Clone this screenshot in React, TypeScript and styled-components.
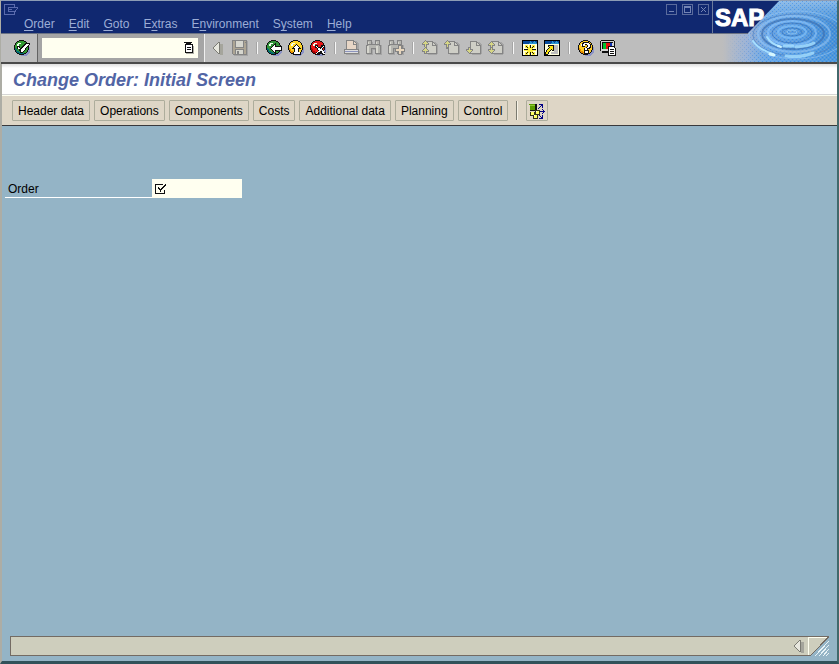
import React from "react";
import styled, { createGlobalStyle } from "styled-components";

const Global = createGlobalStyle`
  * { box-sizing: border-box; }
  body { margin: 0; }
  body, button, input { font-family: "Liberation Sans", Arial, sans-serif; font-size: 12px; }
  button { cursor: default; }
`;

const Window = styled.div`
  min-height: 100vh;
  display: flex;
  flex-direction: column;
  background: #94b4c6;
  border-top: 1px solid #8c9cb5;
  border-left: 2px solid #adada5;
  border-right: 2px solid #42686b;
  border-bottom: 3px solid #31525a;
`;

const Header = styled.header`
  display: flex;
  height: 63px;
  margin-left: -1px;
  border-bottom: 2px solid #4a4a4a;
  background: #bdbdbd;
`;

const HeaderMain = styled.div`
  flex: 1;
  min-width: 0;
  display: flex;
  flex-direction: column;
`;

const MenuArea = styled.div`
  height: 33px;
  background: #102870;
  border-bottom: 1px solid #6b7384;
`;

const Caption = styled.div`
  display: flex;
  justify-content: space-between;
  height: 15px;
  padding: 2px 2px 0 3px;
`;

const Controls = styled.div`
  display: flex;
  gap: 4px;
`;

const PlainButton = styled.button`
  display: flex;
  align-items: center;
  justify-content: center;
  padding: 0;
  border: 0;
  background: transparent;
`;

const MenuBar = styled.nav`
  display: flex;
  gap: 14px;
  padding-left: 23px;
`;

const MenuItem = styled(PlainButton)`
  display: block;
  height: 16px;
  line-height: 16px;
  color: #9cadd6;
  u { text-underline-offset: 2px; }
`;

const Toolbar = styled.div`
  flex: 1;
  display: flex;
  align-items: stretch;
`;

const EnterCell = styled.div`
  width: 37px;
  display: flex;
  align-items: center;
  justify-content: center;
  padding-left: 5px;
  border-right: 1px solid #636363;
`;

const CommandCell = styled.div`
  width: 167px;
  padding: 4px 6px 4px 4px;
  background: #a5a5a5;
  border-right: 1px solid #efefef;
`;

const CommandBox = styled.div`
  display: flex;
  height: 20px;
  background: #fffff0;
`;

const BareInput = styled.input`
  flex: 1;
  min-width: 0;
  padding: 0 3px;
  border: 0;
  outline: 0;
  background: transparent;
`;

const DropButton = styled(PlainButton)`
  width: 18px;
`;

const Tools = styled.div`
  display: flex;
  align-items: center;
  padding-left: 2px;
`;

const ToolButton = styled(PlainButton)`
  width: 22px;
  height: 22px;
`;

const ToolRule = styled.span`
  width: 2px;
  height: 12px;
  margin: 0 5px;
  border-left: 1px solid #a5a5a5;
  background: #f7f7f7;
`;

const Brand = styled.div`
  width: 125px;
  flex: none;
  overflow: hidden;
`;

const TitleBar = styled.div`
  height: 31px;
  padding: 5px 0 0 11px;
  background: linear-gradient(#dedede, #ffffff 4px);
  border-bottom: 1px solid #d6d6d6;
`;

const Title = styled.h1`
  margin: 0;
  font-size: 18px;
  line-height: 22px;
  font-style: italic;
  font-weight: bold;
  color: #5265a5;
`;

const ActionBar = styled.div`
  display: flex;
  align-items: center;
  gap: 4px;
  height: 31px;
  padding-left: 10px;
  background: #ded6c6;
  border-top: 1px solid #fffff0;
  border-bottom: 1px solid #39393c;
`;

const Action = styled.button<{ $icon?: boolean }>`
  display: flex;
  align-items: center;
  justify-content: center;
  height: 21px;
  padding: ${(p) => (p.$icon ? "0 1px" : "0 5px")};
  border: 1px solid #adad9c;
  border-radius: 1px;
  background: transparent;
  color: #000;
`;

const ActionRule = styled.span`
  width: 2px;
  height: 19px;
  margin: 0 4px;
  border-left: 1px solid #7b7b70;
  background: #f7f3e7;
`;

const Content = styled.main`
  flex: 1;
  padding: 53px 3px 0;
`;

const Field = styled.div`
  display: flex;
  height: 19px;
`;

const FieldLabel = styled.label`
  width: 147px;
  padding-left: 3px;
  line-height: 20px;
  border-bottom: 1px solid #fff;
`;

const FieldBox = styled.div`
  display: flex;
  align-items: center;
  width: 90px;
  padding-left: 3px;
  background: #fffff0;
`;

const Footer = styled.footer`
  display: flex;
  margin: 0 7px 5px 8px;
`;

const Status = styled.div`
  flex: 1;
  display: flex;
  align-items: center;
  justify-content: flex-end;
  height: 20px;
  padding-right: 3px;
  border: 1px solid #736b63;
  border-right: 0;
  background: #cecebd;
`;

type IconProps = { w?: number; h?: number; children: React.ReactNode };
const Icon = ({ w = 18, h = 18, children }: IconProps) => (
  <svg width={w} height={h} viewBox={`0 0 ${w} ${h}`} fill="none" shapeRendering="crispEdges" aria-hidden="true">
    {children}
  </svg>
);

const BALL = "M6 1h5v1h2v1h1v1h1v2h1v5h-1v2h-1v1h-1v1h-2v1H6v-1H4v-1H3v-1H2v-2H1V6h1V4h1V3h1V2h2z";
const BALL_FILL = "M6 2h5v1h2v1h1v2h1v5h-1v2h-1v1h-2v1H6v-1H4v-1H3v-2H2V6h1V4h1V3h2z";
const Ball = ({ fill, low, children }: { fill: string; low: string; children: React.ReactNode }) => (
  <Icon>
    <path d="M16 8h1v6h-1v1h-1v1h-1v1H8v-1h3v-1h2v-1h1v-1h1v-2h1z" fill="#8c94c6" />
    <path d={BALL} fill="#101010" />
    <path d={BALL_FILL} fill={fill} />
    <path d="M2 9h1v1h1v2h2v1h2v1h3v1H6v-1H4v-1H3v-2H2z" fill={low} />
    <path d="M5 4h3v1H6v2H4V5h1z" fill="#efffef" />
    {children}
  </Icon>
);

const CheckBall = () => (
  <Ball fill="#319c31" low="#006b73">
    <path d="M4 7h3v2h1V8h1V7h1V6h1V5h1V4h5v2h-1v1h-1v1h-1v1h-1v2h-1v1h-1v1h-1v1H7v-2H6v-2H4z" fill="#101010" />
    <path d="M5 8h1v1h1v2h1v-1h1V9h1V8h1V7h1V6h1V5h3v1h-1v1h-1v1h-1v1h-1v2h-1v1h-1v1H8v-2H7v-1H5z" fill="#fff" />
  </Ball>
);
const BackBall = () => (
  <Ball fill="#319439" low="#006b73">
    <path d="M10 4h1v3h6v5h-6v3h-1v-1H9v-1H8v-1H7v-1H6v-1H5V9h1V8h1V7h1V6h1V5h1z" fill="#101010" />
    <path d="M6 9h1V8h1V7h1V6h1v2h6v3h-6v2H9v-1H8v-1H7v-1H6z" fill="#fff" />
  </Ball>
);
const UpBall = () => (
  <Ball fill="#ffd629" low="#ef9400">
    <path d="M9 5h1v1h1v1h1v1h1v1h1v1h-2v3h2v3H6v-3h1v-3H5V9h1V8h1V7h1V6h1z" fill="#101010" />
    <path d="M9 6h1v1h1v1h1v1h-1v4h2v2H7v-2h1V9H7V8h1V7h1z" fill="#fff" />
  </Ball>
);
const CancelBall = () => (
  <Ball fill="#e71818" low="#ad0000">
    <path d="M6 6h3v2h3V6h4v3h-2v2h1v2h1v3h-3v-2h-2v2H7v-3h2v-2H8V9H6z" fill="#101010" />
    <path d="M7 7h1v1h1v1h2v1h1V9h1V8h1V7h1v1h-1v1h-1v2h1v1h1v2h1v1h-2v-1h-1v-2h-2v1H9v1H8v1H7v-1h1v-1h1v-1h1v-1H9V9H8V8H7z" fill="#fff" />
  </Ball>
);

const G = "#848484";
const SaveIcon = () => (
  <Icon>
    <path d="M2 2h15v15H3z" fill="#a5a5a5" />
    <path d="M1.5 1.5h14v14h-13l-1-1z" fill="#ada594" stroke={G} />
    <path d="M4 2h9v6H4zM5 11h7v4H5z" fill="#d6d6ce" />
    <path d="M4.5 2v6.5h8V2M4.5 15v-4.5h8V15M14 3h1" stroke={G} />
    <path d="M6 12h2v3H6z" fill={G} />
  </Icon>
);
const PrintIcon = () => (
  <Icon>
    <path d="M4 2h9l3 3v7h1v4H3z" fill="#a5a5a5" />
    <path d="M3.5 1.5h7l3 3v6h-10z" fill="#e7d6c6" stroke={G} />
    <path d="M10.5 2v3h3" stroke={G} />
    <path d="M1.5 10.5h14v4h-14z" fill="#dedede" stroke={G} />
    <path d="M2 12h13v1H2z" fill="#8c94bd" />
  </Icon>
);
const Binoculars = ({ plus }: { plus?: boolean }) => (
  <Icon>
    <path d="M4 3h4v3h3V3h4v3h2v10h-6v-5H8v5H2V6h2z" fill="#a5a5a5" />
    <path d="M2.5 1.5h4v4h4v-4h4v5h1v8h-5v-5h-4v5h-5v-8h1z" fill="#b5b5b0" stroke={G} />
    <path d="M3 3h1v3H3zM2 7h2v7H2zM11 3h1v3h-1zM11 7h2v7h-2z" fill="#d6d6ce" />
    <path d="M2 5h5v1H2zM10 5h5v1h-5z" fill={G} />
    {plus && <path d="M11.5 6.5h3v3h3v3h-3v3h-3v-3h-3v-3h3z" fill="#e7d6bd" stroke={G} />}
  </Icon>
);
const PageIcon = ({ up, up2, down, down2 }: { up?: boolean; up2?: boolean; down?: boolean; down2?: boolean }) => (
  <Icon>
    <path d="M7 3h7l3 3v9h-1v1H7z" fill="#a5a5a5" />
    <path d="M5.5 2.5h6l4 4v8h-10z" fill="#cecec6" stroke={G} />
    <path d="M11.5 3v3.5h4" stroke={G} />
    {(up || up2) && <path d="M4 1h1v1h1v1h1v1h1v2H6v2H3V6H1V4h1V3h1V2h1z" fill={G} />}
    {up && <path d="M3 8h3v2H3z" fill={G} />}
    {(up || up2) && <path d="M4 2h1v1h1v1h1v1H5v3H4V5H2V4h1V3h1z" fill="#d6d684" />}
    {up2 && <path d="M4 8h1v1h1v1h1v1h1v2H6v2H3v-2H1v-2h1v-1h1V9h1z" fill={G} />}
    {up2 && <path d="M4 9h1v1h1v1h1v1H5v2H4v-2H2v-1h1v-1h1z" fill="#d6d684" />}
    {down2 && <path d="M4 2h1v1h1v1h1v1h1v2H6v2H3V7H1V5h1V4h1V3h1z" fill={G} />}
    {down2 && <path d="M4 3h1v1h1v1h1v1H5v2H4V6H2V5h1V4h1z" fill="#d6d684" />}
    {(down || down2) && <path d="M3 8h3v2h2v2H7v1H6v1H5v1H4v-1H3v-1H2v-1H1v-2h2z" fill={G} />}
    {(down || down2) && <path d="M4 9h1v2h2v1H6v1H5v1H4v-1H3v-1H2v-1h2z" fill="#d6d684" />}
  </Icon>
);
const Frame = () => (
  <>
    <path d="M1.5 1.5h15v15h-15z" fill="#ffffde" stroke="#000" />
    <path d="M2 2h14v3H2z" fill="#084a9c" />
    <path d="M9 2h1v1h1v1h1V3h1V2h1v1h1v1h1v1H8V4h1z" fill="#2994ce" />
  </>
);
const NewSession = () => (
  <Icon>
    <Frame />
    <path d="M4 6h3v2h1V6h2v2h1V6h3v3h-2v1h3v2h-3v1h2v3h-3v-2h-1v2H8v-2H7v2H4v-3h2v-1H3v-2h3V9H4z" fill="#ffef39" />
    <path d="M9 6v3M9 13v3M3 10.5h4M11 10.5h4" stroke="#101010" />
    <path d="M5 7h1v1H5zM6 8h1v1H6zM12 7h1v1h-1zM11 8h1v1h-1zM5 14h1v1H5zM6 13h1v1H6zM12 14h1v1h-1zM11 13h1v1h-1z" fill="#101010" />
  </Icon>
);
const Shortcut = () => (
  <Icon>
    <Frame />
    <path d="M11 6h4v9H8v-2h3z" fill="#bdbdbd" />
    <path d="M5 6h6v6H9v-1H8v1H7v1H6v2H5v1H2v-3h1v-2h1v-1h1V9h1V8H5z" fill="#101010" />
    <path d="M6 7h4v4H9v-1H8v1H7v1H6v1H5v2H3v-2h1v-2h1v-1h1V9h1V8H6z" fill="#ffe710" />
  </Icon>
);
const HelpIcon = () => (
  <Ball fill="#ffce21" low="#e78c00">
    <path d="M6 3h6v1h1v1h1v4h-1v1h-2v1h1v4H7V9h2V8h1V6H8v2H5V4h1z" fill="#101010" />
    <path d="M7 4h5v1h1v3h-1v1h-2v2H8V9h2V8h1V6h-1V5H8v2H6V5h1zM8 12h3v2H8z" fill="#fff" />
  </Ball>
);
const LayoutIcon = () => (
  <Icon>
    <path d="M2 1h13v1h1v12H3v-2H1V2h1z" fill="#101010" />
    <path d="M2 2h13v10H2z" fill="#d6d6d6" />
    <path d="M4 4h3v6H4z" fill="#00c631" />
    <path d="M7 4h4v6H7z" fill="#e71010" />
    <path d="M11 4h2v6h-2z" fill="#1031b5" />
    <path d="M3 3h11v1H3zM3 3h1v7H3z" fill="#101010" />
    <path d="M9.5 7.5h5l2 2v7h-7z" fill="#fff" stroke="#101010" />
    <path d="M11 10.5h4M11 12.5h4M11 14.5h4" stroke="#101010" />
  </Icon>
);
const LeftTriangle = () => (
  <Icon w={12} h={14}>
    <path d="M8 3h3v11H8z" fill="#a5a59c" />
    <path d="M7.5 1.5v11h-1l-5-5v-1l5-5z" fill="#e7e7de" stroke="#7b7b73" />
  </Icon>
);
const NetworkIcon = () => (
  <Icon>
    <path d="M1 2h8v7H2V3H1z" fill="#101010" />
    <path d="M1 2h6v6H2V3H1z" fill="#5a9c00" />
    <path d="M2 3h5v1H2z" fill="#8cc631" />
    <path d="M7 8h5v5H7zM2 10h5v4H2zM5 13h5v4H5z" fill="#313118" />
    <path d="M8 9h3v3H8zM3 10h3v3H3zM6 13h3v3H6z" fill="#ffff63" />
    <path d="M8 9h1v1H8zM6 13h1v1H6z" fill="#fff" />
    <path
      d="M10 6h1v1h-1zM11 5h1v1h-1zM12 4h1v1h-1zM13 3h1v1h-1zM11 2h4v1h-4zM14 2h1v4h-1zM12 9h5v1h-5zM14 7h1v1h-1zM15 8h1v1h-1zM15 10h1v1h-1zM14 11h1v1h-1zM11 13h1v1h-1zM12 14h1v1h-1zM13 15h1v1h-1zM11 16h4v1h-4zM14 13h1v4h-1z"
      fill="#000084"
    />
  </Icon>
);

const BrandArt = () => (
  <svg width="126" height="61" viewBox="0 0 126 61" role="img" aria-label="SAP">
    <defs>
      <linearGradient id="water" x1="0" x2="1" y1="0" y2="0">
        <stop offset="0.08" stopColor="#bdbdbd" />
        <stop offset="0.28" stopColor="#a5b5d6" />
        <stop offset="0.45" stopColor="#6ba5e7" />
        <stop offset="1" stopColor="#428cd6" />
      </linearGradient>
      <linearGradient id="shine" x1="0" x2="0" y1="0" y2="1">
        <stop offset="0" stopColor="#9cc6ef" stopOpacity="0.8" />
        <stop offset="0.45" stopColor="#5aa5e7" stopOpacity="0.1" />
        <stop offset="1" stopColor="#63b5f7" stopOpacity="0.3" />
      </linearGradient>
      <linearGradient id="fade" x1="0" x2="1" y1="0" y2="0">
        <stop offset="0" stopColor="#000" />
        <stop offset="0.3" stopColor="#fff" />
      </linearGradient>
      <mask id="fadeMask">
        <path d="M14 0h112v61H14z" fill="url(#fade)" />
      </mask>
      <pattern id="grain" width="4" height="4" patternUnits="userSpaceOnUse">
        <path d="M0 0h1v1H0zM2 2h1v1H2z" fill="#a5b5b5" />
        <path d="M2 0h1v1H2zM0 2h1v1H0z" fill="#2173ce" />
      </pattern>
    </defs>
    <path d="M0 0h126v61H0z" fill="url(#water)" />
    <g mask="url(#fadeMask)">
      <path d="M14 0h112v61H14z" fill="url(#shine)" />
      <path d="M14 0h112v61H14z" fill="url(#grain)" opacity="0.4" shapeRendering="crispEdges" />
    </g>
    <g fill="none" opacity="0.6">
      <ellipse cx="80" cy="31" rx="5" ry="2" stroke="#9cd6ff" />
      <ellipse cx="80" cy="31" rx="10" ry="4" stroke="#296bb5" />
      <ellipse cx="80" cy="31" rx="14" ry="6" stroke="#84c6ff" strokeWidth="2" />
      <ellipse cx="80" cy="32" rx="20" ry="10" stroke="#316bb5" />
      <ellipse cx="80" cy="32" rx="24" ry="12" stroke="#8cc6ff" strokeWidth="2" />
      <ellipse cx="81" cy="33" rx="31" ry="15" stroke="#396bad" strokeWidth="2" />
      <ellipse cx="82" cy="33" rx="36" ry="18" stroke="#94c6f7" strokeWidth="2" />
      <ellipse cx="84" cy="34" rx="43" ry="21" stroke="#4a7bbd" />
      <ellipse cx="85" cy="34" rx="48" ry="24" stroke="#94c6f7" />
    </g>
    <g fill="none" stroke="#a5deff" strokeLinecap="round">
      <path d="M41 40q5 8 20 13M55 36q4 7 12 9" strokeWidth="2" />
      <path d="M72 45h9M74 55q15 2 27-3M84 46q13-1 18-4" strokeWidth="3" opacity="0.8" />
      <path d="M58 53l4 1" stroke="#d6f7ff" strokeWidth="3" />
      <path d="M66 45l3 1" stroke="#c6efff" strokeWidth="2" />
    </g>
    <path d="M0 0h67L36 32H0z" fill="#102870" />
    <path d="M0 0h1v33H0z" fill="#6b7b9c" />
    <path d="M0 32h36v1H0z" fill="#6b7384" />
    <text x="3" y="25" fontFamily="Liberation Sans, Arial, sans-serif" fontSize="24" fontWeight="bold" fill="#fff" stroke="#fff" strokeWidth="1">
      SAP
    </text>
  </svg>
);

const menus: [string, string, string][] = [
  ["", "O", "rder"],
  ["", "E", "dit"],
  ["", "G", "oto"],
  ["E", "x", "tras"],
  ["E", "n", "vironment"],
  ["S", "y", "stem"],
  ["", "H", "elp"],
];

const toolGroups: [string, React.ReactNode][][] = [
  [["Collapse", <LeftTriangle />], ["Save", <SaveIcon />]],
  [["Back", <BackBall />], ["Exit", <UpBall />], ["Cancel", <CancelBall />]],
  [["Print", <PrintIcon />], ["Find", <Binoculars />], ["Find next", <Binoculars plus />]],
  [
    ["First page", <PageIcon up2 />],
    ["Previous page", <PageIcon up />],
    ["Next page", <PageIcon down />],
    ["Last page", <PageIcon down2 />],
  ],
  [["New session", <NewSession />], ["Create shortcut", <Shortcut />]],
  [["Help", <HelpIcon />], ["Customize layout", <LayoutIcon />]],
];

const windowControls: [string, string][] = [
  ["Minimize", "M3 7.5h5"],
  ["Maximize", "M2.5 3.5h6v5h-6zM2 2.5h7"],
  ["Close", "M3 3l5 5M8 3L3 8"],
];

const actions = ["Header data", "Operations", "Components", "Costs", "Additional data", "Planning", "Control"];

export default function App() {
  return (
    <Window>
      <Global />
      <Header>
        <HeaderMain>
          <MenuArea>
            <Caption>
              <PlainButton aria-label="Window menu">
                <Icon w={16} h={12}>
                  <path d="M10.5 3V0.5h-10v10h10V8M14 3.5H4.5v4H11l3-4M4 5.5h4" stroke="#5a6bad" />
                </Icon>
              </PlainButton>
              <Controls>
                {windowControls.map(([name, d]) => (
                  <PlainButton key={name} aria-label={name}>
                    <Icon w={12} h={12}>
                      <path d="M0.5 0.5h10v10h-10z" stroke="#5a6b9c" />
                      <path d={d} stroke="#7384b5" />
                    </Icon>
                  </PlainButton>
                ))}
              </Controls>
            </Caption>
            <MenuBar>
              {menus.map(([a, key, b]) => (
                <MenuItem key={a + key + b}>
                  {a}
                  <u>{key}</u>
                  {b}
                </MenuItem>
              ))}
            </MenuBar>
          </MenuArea>
          <Toolbar>
            <EnterCell>
              <PlainButton aria-label="Enter">
                <CheckBall />
              </PlainButton>
            </EnterCell>
            <CommandCell>
              <CommandBox>
                <BareInput aria-label="Command" />
                <DropButton aria-label="Command history">
                  <Icon w={12} h={14}>
                    <path d="M3 5h8v8H3z" fill="#adada5" />
                    <path d="M2.5 3.5h7v8h-7z" fill="#fff" stroke="#101010" />
                    <path d="M1 1h8v1H8v1H7v1H4V3H3V2H1z" fill="#101010" />
                    <path d="M4 6.5h4M4 8.5h4" stroke="#101010" />
                  </Icon>
                </DropButton>
              </CommandBox>
            </CommandCell>
            <Tools>
              {toolGroups.map((group, i) => (
                <React.Fragment key={i}>
                  {i > 0 && <ToolRule />}
                  {group.map(([name, icon]) => (
                    <ToolButton key={name} aria-label={name}>
                      {icon}
                    </ToolButton>
                  ))}
                </React.Fragment>
              ))}
            </Tools>
          </Toolbar>
        </HeaderMain>
        <Brand>
          <BrandArt />
        </Brand>
      </Header>
      <TitleBar>
        <Title>Change Order: Initial Screen</Title>
      </TitleBar>
      <ActionBar>
        {actions.map((name) => (
          <Action key={name}>{name}</Action>
        ))}
        <ActionRule />
        <Action $icon aria-label="Order overview">
          <NetworkIcon />
        </Action>
      </ActionBar>
      <Content>
        <Field>
          <FieldLabel htmlFor="order">Order</FieldLabel>
          <FieldBox>
            <Icon w={12} h={12}>
              <path d="M8 1.5H0.5v9h9V7" stroke="#101010" />
              <path d="M3 4.5l2.5 3L11 1.5" stroke="#101010" strokeWidth="1.5" />
            </Icon>
            <BareInput id="order" required />
          </FieldBox>
        </Field>
      </Content>
      <Footer>
        <Status>
          <PlainButton aria-label="Show status fields">
            <LeftTriangle />
          </PlainButton>
        </Status>
        <Icon w={22} h={20}>
          <path d="M0 0h21L2 20H0z" fill="#cecebd" />
          <path d="M0 0.5h21" stroke="#736b63" />
          <path d="M0.5 20V1.5H19" stroke="#fffff0" />
          <path d="M21 0.5L2 20" stroke="#736b63" />
          <path d="M0 19.5h3" stroke="#736b63" />
          <path d="M21 5L7 20M21 9L11 20M21 13L15 20M21 17l-3 3" stroke="#e7f3f7" />
        </Icon>
      </Footer>
    </Window>
  );
}
